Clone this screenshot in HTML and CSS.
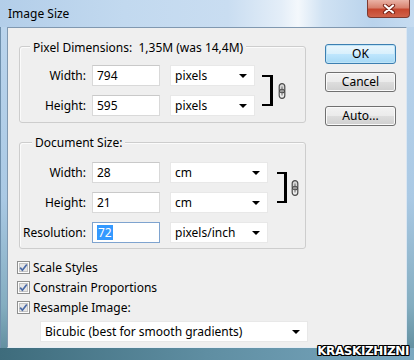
FILE: index.html
```html
<!DOCTYPE html>
<html>
<head>
<meta charset="utf-8">
<link rel="stylesheet" href="styles.css">
</head>
<body>
<div class="window">
  <div class="titlebar">
    <span class="title">Image Size</span>
    <div class="close">
      <svg width="14" height="10" viewBox="0 0 14 10"><path d="M3 1.5 L11 8.5 M11 1.5 L3 8.5" stroke="#7a2418" stroke-width="4.2" stroke-linecap="round"/><path d="M3 1.5 L11 8.5 M11 1.5 L3 8.5" stroke="#ffffff" stroke-width="2.2" stroke-linecap="round"/></svg>
    </div>
  </div>
  <div class="client">
    <div class="main">
      <div class="group group-px">
        <div class="legend">Pixel Dimensions:&nbsp; 1,35M (was 14,4M)</div>
        <div class="grid">
          <div class="lbl">Width:</div>
          <div class="input">794</div>
          <div class="select sel-px"><span>pixels</span><i class="arrow"></i></div>
          <div class="bracket br-px"></div>
          <div class="link link-px"><svg width="8" height="16" viewBox="0 0 8 16"><rect x="1.2" y="0.7" width="5.6" height="9" rx="2.8" fill="#d8d8d8" stroke="#4a4a4a" stroke-width="1.2"/><rect x="1.2" y="6.3" width="5.6" height="9" rx="2.8" fill="none" stroke="#4a4a4a" stroke-width="1.2"/><line x1="4" y1="3.5" x2="4" y2="12.5" stroke="#6a6a6a" stroke-width="1"/></svg></div>
          <div class="lbl">Height:</div>
          <div class="input">595</div>
          <div class="select sel-px"><span>pixels</span><i class="arrow"></i></div>
        </div>
      </div>
      <div class="group group-doc">
        <div class="legend">Document Size:</div>
        <div class="grid">
          <div class="lbl">Width:</div>
          <div class="input">28</div>
          <div class="select sel-doc"><span>cm</span><i class="arrow"></i></div>
          <div class="bracket br-doc"></div>
          <div class="link link-doc"><svg width="8" height="16" viewBox="0 0 8 16"><rect x="1.2" y="0.7" width="5.6" height="9" rx="2.8" fill="#d8d8d8" stroke="#4a4a4a" stroke-width="1.2"/><rect x="1.2" y="6.3" width="5.6" height="9" rx="2.8" fill="none" stroke="#4a4a4a" stroke-width="1.2"/><line x1="4" y1="3.5" x2="4" y2="12.5" stroke="#6a6a6a" stroke-width="1"/></svg></div>
          <div class="lbl">Height:</div>
          <div class="input">21</div>
          <div class="select sel-doc"><span>cm</span><i class="arrow"></i></div>
          <div class="lbl">Resolution:</div>
          <div class="input focused"><span class="hl">72</span></div>
          <div class="select sel-doc"><span>pixels/inch</span><i class="arrow"></i></div>
        </div>
      </div>
      <div class="checks">
        <div class="check"><svg class="cb" width="13" height="13" viewBox="0 0 13 13"><rect x="0.5" y="0.5" width="12" height="12" fill="#fdfdfd" stroke="#8e8f8f"/><rect x="2.5" y="2.5" width="8" height="8" fill="#e6e6e6" stroke="#c4c4c4"/><path d="M3.2 6.6 L5.4 9.2 L9.8 3.4" fill="none" stroke="#4a6aa8" stroke-width="1.7"/></svg><span>Scale Styles</span></div>
        <div class="check"><svg class="cb" width="13" height="13" viewBox="0 0 13 13"><rect x="0.5" y="0.5" width="12" height="12" fill="#fdfdfd" stroke="#8e8f8f"/><rect x="2.5" y="2.5" width="8" height="8" fill="#e6e6e6" stroke="#c4c4c4"/><path d="M3.2 6.6 L5.4 9.2 L9.8 3.4" fill="none" stroke="#4a6aa8" stroke-width="1.7"/></svg><span>Constrain Proportions</span></div>
        <div class="check"><svg class="cb" width="13" height="13" viewBox="0 0 13 13"><rect x="0.5" y="0.5" width="12" height="12" fill="#fdfdfd" stroke="#8e8f8f"/><rect x="2.5" y="2.5" width="8" height="8" fill="#e6e6e6" stroke="#c4c4c4"/><path d="M3.2 6.6 L5.4 9.2 L9.8 3.4" fill="none" stroke="#4a6aa8" stroke-width="1.7"/></svg><span>Resample Image:</span></div>
      </div>
      <div class="select sel-method"><span>Bicubic (best for smooth gradients)</span><i class="arrow"></i></div>
    </div>
    <div class="buttons">
      <div class="btn btn-default">OK</div>
      <div class="btn btn-cancel">Cancel</div>
      <div class="btn btn-auto">Auto...</div>
    </div>
  </div>
  <div class="bottom"></div>
  <div class="watermark">KRASKIZHIZNI</div>
</div>
</body>
</html>
```

FILE: styles.css
```css
* { box-sizing: border-box; }
html, body { margin: 0; padding: 0; }
body {
  width: 414px;
  height: 360px;
  overflow: hidden;
  font-family: "Noto Sans", "Open Sans", sans-serif;
  font-size: 12px;
  color: #000;
}
.window {
  position: relative;
  width: 414px;
  height: 360px;
  display: flex;
  flex-direction: column;
  background: linear-gradient(180deg, #bdd6ee 0%, #aac9e4 55%, #84adc0 85%, #5a8898 100%);
  box-shadow: inset 1px 0 0 #6f90ad;
}
.titlebar {
  height: 27px;
  flex: none;
  display: flex;
  align-items: flex-start;
  padding-left: 8px;
  background: linear-gradient(90deg, #b3cee9 0%, #c2d9ef 30%, #c9ddf1 55%, #e4eef8 68%, #f4f8fc 72%, #d0e2f3 78%, #b9d3ec 90%, #c6dcf1 100%);
}
.title {
  line-height: 27px;
  font-size: 12px;
}
.close {
  margin-left: auto;
  margin-right: 4px;
  width: 43px;
  height: 18px;
  border: 1px solid #7d3a30;
  border-top: none;
  border-radius: 0 0 4px 4px;
  background: linear-gradient(180deg, #eab3a6 0%, #d8826f 45%, #c6472f 55%, #d0634a 100%);
  display: flex;
  align-items: center;
  justify-content: center;
}
.client {
  flex: 1;
  margin: 0 7px;
  display: flex;
  padding: 16px 0 0 9px;
  background: #efefef;
  border: 1px solid;
  border-color: #8098b0 #dce7f2 #e6eef5 #8098b0;
}
.main {
  width: 291px;
  flex: none;
  display: flex;
  flex-direction: column;
}
.group {
  margin-left: 2px;
  width: 287px;
  border: 1px solid #cdcdcd;
  border-radius: 3px;
  box-shadow: inset 1px 1px 0 #fbfbfb;
}
.group-px { margin-top: 2px; padding-bottom: 6px; }
.group-doc { margin-top: 19px; padding-bottom: 5px; }
.legend {
  width: fit-content;
  margin: -7px 0 0 10px;
  padding: 0 3px 0 3px;
  line-height: 15px;
  background: #efefef;
}
.group-doc .legend { margin: -8px 0 0 12px; }
.grid {
  display: grid;
  grid-template-columns: auto auto auto auto auto;
  grid-auto-rows: 21px;
  row-gap: 9px;
  margin-top: 10px;
  justify-content: start;
}
.group-doc .grid { margin-top: 12px; }
.lbl {
  width: 66px;
  text-align: right;
  line-height: 21px;
}
.input {
  margin-left: 6px;
  width: 68px;
  height: 21px;
  background: #fff;
  border: 1px solid #d9d9d9;
  border-top-color: #c9c9c9;
  padding-left: 4px;
  line-height: 19px;
}
.input.focused { border-color: #7ea3cf; }
.hl {
  display: inline-block;
  background: #3399ff;
  color: #fff;
  line-height: 15px;
  padding: 0 1px;
}
.select {
  margin-left: 10px;
  height: 21px;
  background: #fff;
  border: 1px solid #e8e8e8;
  display: flex;
  align-items: center;
  justify-content: space-between;
  padding: 0 7px 0 4px;
}
.sel-px { width: 85px; }
.sel-doc { width: 98px; }
.arrow {
  width: 0;
  height: 0;
  border-left: 4px solid transparent;
  border-right: 4px solid transparent;
  border-top: 4px solid #000;
}
.bracket {
  grid-row: 1 / 3;
  width: 11px;
  margin: 10px 0 10px 7px;
  border: 2px solid #000;
  border-right-width: 3px;
  border-left: none;
}
.br-doc { grid-column: 4; margin-left: 9px; width: 10px; }
.br-px { grid-column: 4; }
.link {
  grid-row: 1 / 3;
  grid-column: 5;
  align-self: center;
  margin-left: 5px;
  display: flex;
}
.link-doc { margin-left: 4px; }
.checks {
  margin-top: 12px;
  display: flex;
  flex-direction: column;
  gap: 7px;
}
.check {
  height: 13px;
  display: flex;
  align-items: center;
  gap: 3px;
}
.cb { flex: none; display: block; }
.sel-method {
  margin-left: 23px;
  margin-top: 7px;
  width: 268px;
}
.buttons {
  margin-left: 17px;
  width: 71px;
  display: flex;
  flex-direction: column;
}
.btn {
  height: 20px;
  border: 1px solid #707070;
  border-radius: 3px;
  background: linear-gradient(180deg, #f2f2f2 0%, #ebebeb 48%, #dddddd 52%, #cfcfcf 100%);
  box-shadow: inset 0 0 0 1px #fafafa;
  text-align: center;
  line-height: 18px;
}
.btn-default {
  border-color: #3c7fb1;
  background: linear-gradient(180deg, #eaf6fd 0%, #d9f0fc 48%, #bee6fd 52%, #a7d9f5 100%);
  box-shadow: inset 0 0 0 1px #bfe4f7;
}
.btn-cancel { margin-top: 8px; }
.btn-auto { margin-top: 14px; }
.bottom {
  height: 12px;
  flex: none;
  background: linear-gradient(90deg, #3e6c7c 0%, #5f8ea2 50%, #7aa8c0 100%);
}
.watermark {
  position: absolute;
  right: 5px;
  bottom: 2px;
  font-family: "DejaVu Sans", sans-serif;
  font-weight: bold;
  font-size: 12px;
  line-height: 14px;
  color: #fff;
  letter-spacing: -0.4px;
  text-shadow: 1px 0 0 #000, -1px 0 0 #000, 0 1px 0 #000, 0 -1px 0 #000, 1px 1px 0 #000, -1px -1px 0 #000, 1px -1px 0 #000, -1px 1px 0 #000;
}
```
